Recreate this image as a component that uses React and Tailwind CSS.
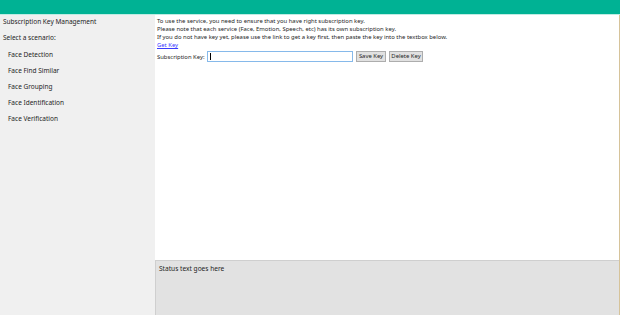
export default function App() {
  const items = ["Face Detection", "Face Find Similar", "Face Grouping", "Face Identification", "Face Verification"];
  return (
    <div className="w-[620px] h-[315px] flex flex-col overflow-hidden bg-white text-[#1e1e1e]" style={{ fontFamily: '"Noto Sans", "Liberation Sans", sans-serif' }}>
      <div className="h-[15px] shrink-0 bg-[#00b294] border-b border-[#bfece3]" />
      <div className="flex flex-1 min-h-0">
        <div className="w-[155px] shrink-0 bg-[#f0f0f0] flex flex-col text-[6.5px] leading-[8px]">
          <div className="pl-[3px] pt-[3px]">Subscription Key Management</div>
          <div className="pl-[3px] mt-[8px]">Select a scenario:</div>
          <div className="flex flex-col gap-[8px] pl-[8px] mt-[9px]">
            {items.map((t) => (
              <div key={t}>{t}</div>
            ))}
          </div>
        </div>
        <div className="flex-1 flex flex-col border-r border-[#d6c39a]">
          <div className="flex-1 pl-[2px] pt-[2px] text-[5.9px] leading-[8px]">
            <div>To use the service, you need to ensure that you have right subscription key.</div>
            <div>Please note that each service (Face, Emotion, Speech, etc) has its own subscription key.</div>
            <div>If you do not have key yet, please use the link to get a key first, then paste the key into the textbox below.</div>
            <div className="text-[#3b3bff] underline">Get Key</div>
            <div className="flex items-center mt-[2px] h-[11px]">
              <span className="w-[48px]">Subscription Key:</span>
              <div className="ml-[2px] w-[146px] h-[11px] border border-[#86b9ea] bg-white flex items-center pl-[2px]">
                <div className="w-px h-[7px] bg-black" />
              </div>
              <button className="ml-[3px] w-[30px] h-[11px] border border-[#adadad] bg-[#e1e1e1] text-[5.9px] leading-[9px]">Save Key</button>
              <button className="ml-[3px] w-[34px] h-[11px] border border-[#adadad] bg-[#e1e1e1] text-[5.9px] leading-[9px]">Delete Key</button>
            </div>
          </div>
          <div className="h-[55px] shrink-0 bg-[#e2e2e2] border-t border-l border-[#cfcfcf] pl-[3px] pt-[3px] text-[6.6px] leading-[9px]">
            Status text goes here
          </div>
        </div>
      </div>
    </div>
  );
}
